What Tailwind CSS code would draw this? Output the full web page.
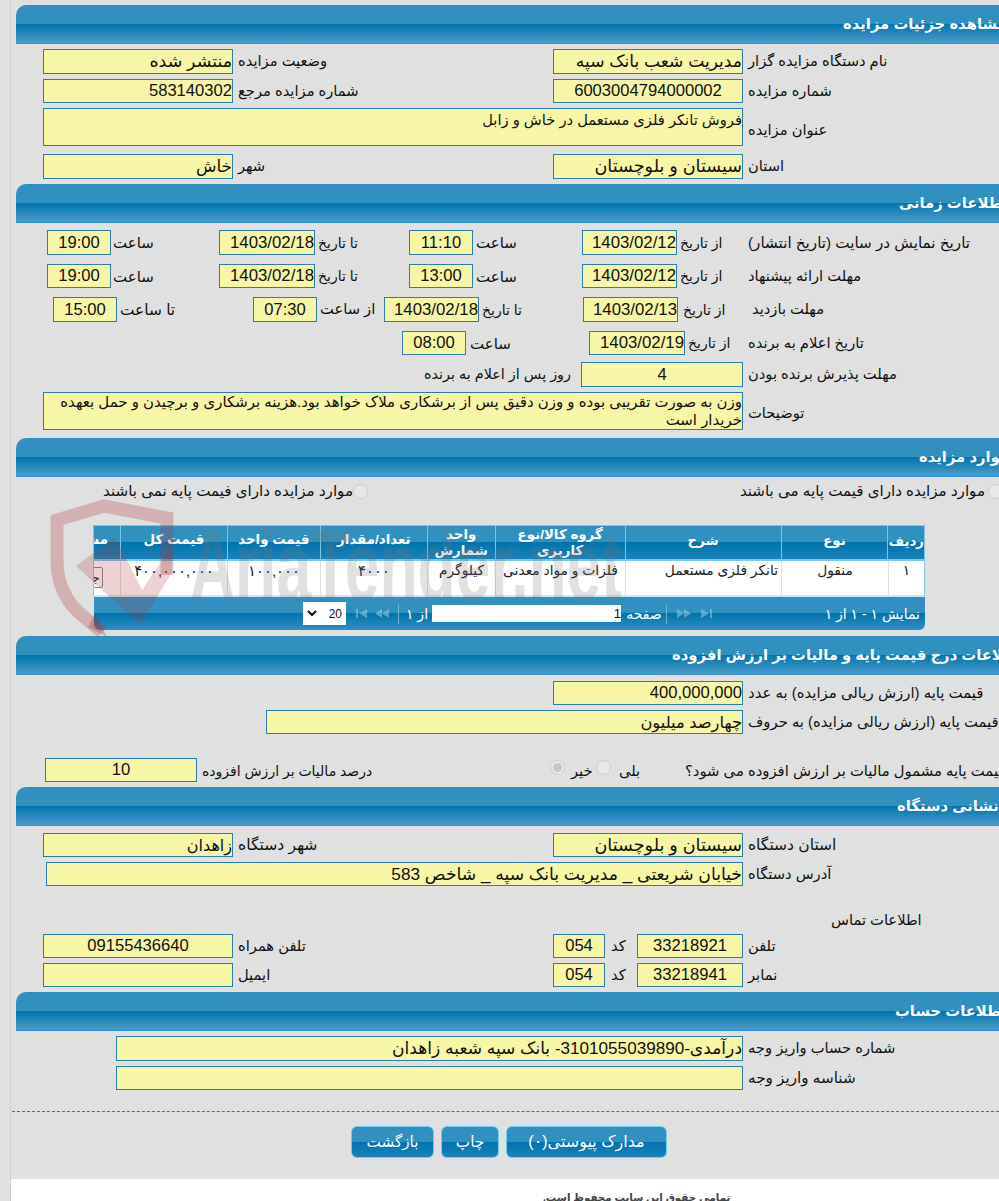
<!DOCTYPE html>
<html lang="fa">
<head>
    <meta charset="UTF-8">
    <title>مشاهده جزئیات مزایده</title>
    <script src="https://cdn.jsdelivr.net/npm/@tailwindcss/browser@4"></script>
</head>
<body class="bg-[#e0e0e0]">
<div class="relative w-[999px] h-[1201px] overflow-hidden pt-[5px] text-[14.7px] leading-none text-[#111] font-['Liberation_Sans','DejaVu_Sans',sans-serif]">
    <div class="absolute left-[10px] top-0 bottom-0 w-px bg-[#cfcfcf]"></div>

    <!-- جزئیات -->
    <div class="ml-[16px] h-[39px] flex items-center rounded-tl-[10px] border-b border-[#2b93da] bg-[linear-gradient(#3090c0_0%,#3090c0_50%,#0273ae_50%,#4a9cc8_100%)] text-white font-bold text-[14.8px]">
        <span dir="rtl" class="ml-[827px] shrink-0 whitespace-nowrap">مشاهده جزئیات مزایده</span>
    </div>
    <div class="mt-[5px] pl-[43px] h-[25px] flex items-center">
        <div dir="rtl" class="w-[190px] h-full flex items-center pt-[1px] border border-[#2a7fb0] bg-[#f7f5a6] text-[17.4px]">منتشر شده</div>
        <span dir="rtl" class="w-[320px] pl-[5px] text-left">وضعیت مزایده</span>
        <div dir="rtl" class="w-[190px] h-full flex items-center pt-[1px] border border-[#2a7fb0] bg-[#f7f5a6] text-[17.1px]">مدیریت شعب بانک سپه</div>
        <span dir="rtl" class="pl-[5px] whitespace-nowrap">نام دستگاه مزایده گزار</span>
    </div>
    <div class="mt-[5px] pl-[43px] h-[24px] flex items-center">
        <div dir="rtl" class="w-[190px] h-full flex items-center pt-[1px] border border-[#2a7fb0] bg-[#f7f5a6] text-[16.6px]">583140302</div>
        <span dir="rtl" class="w-[320px] pl-[5px] text-left">شماره مزایده مرجع</span>
        <div class="w-[190px] h-full flex items-center justify-center pt-[1px] border border-[#2a7fb0] bg-[#f7f5a6] text-[16.6px]">6003004794000002</div>
        <span dir="rtl" class="pl-[5px] whitespace-nowrap">شماره مزایده</span>
    </div>
    <div class="mt-[5px] pl-[43px] h-[38px] flex items-center">
        <div dir="rtl" class="w-[700px] h-full border border-[#2a7fb0] bg-[#f7f5a6] pt-[3px] leading-[17px]">فروش تانکر فلزی مستعمل در خاش و زابل</div>
        <span dir="rtl" class="pl-[5px] pt-[6px] whitespace-nowrap">عنوان مزایده</span>
    </div>
    <div class="mt-[8px] pl-[43px] h-[25px] flex items-center">
        <div dir="rtl" class="w-[190px] h-full flex items-center pt-[1px] border border-[#2a7fb0] bg-[#f7f5a6] text-[16.8px]">خاش</div>
        <span dir="rtl" class="w-[320px] pl-[5px] text-left">شهر</span>
        <div dir="rtl" class="w-[190px] h-full flex items-center pt-[1px] border border-[#2a7fb0] bg-[#f7f5a6] text-[17.6px]">سیستان و بلوچستان</div>
        <span dir="rtl" class="pl-[5px] whitespace-nowrap">استان</span>
    </div>

    <!-- زمانی -->
    <div class="mt-[5px] ml-[16px] h-[39px] flex items-center rounded-tl-[10px] border-b border-[#2b93da] bg-[linear-gradient(#3090c0_0%,#3090c0_50%,#0273ae_50%,#4a9cc8_100%)] text-white font-bold text-[14.8px]">
        <span dir="rtl" class="ml-[883px] shrink-0 whitespace-nowrap">اطلاعات زمانی</span>
    </div>
    <div class="mt-[7px] pl-[47px] h-[25px] flex items-center">
        <div class="w-[64px] h-full flex items-center justify-center pt-[1px] border border-[#2a7fb0] bg-[#f7f5a6] text-[16.6px]">19:00</div>
        <span dir="rtl" class="w-[108px] pl-[2px] text-left text-[15px]">ساعت</span>
        <div class="w-[96px] h-full flex items-center justify-end pt-[1px] border border-[#2a7fb0] bg-[#f7f5a6] text-[16.8px]">1403/02/18</div>
        <span dir="rtl" class="w-[94px] pl-[3px] text-left text-[14px]">تا تاریخ</span>
        <div class="w-[64px] h-full flex items-center justify-center pt-[1px] border border-[#2a7fb0] bg-[#f7f5a6] text-[16.6px]">11:10</div>
        <span dir="rtl" class="w-[109px] pl-[3px] text-left text-[15px]">ساعت</span>
        <div class="w-[95px] h-full flex items-center justify-end pt-[1px] border border-[#2a7fb0] bg-[#f7f5a6] text-[16.8px]">1403/02/12</div>
        <span dir="rtl" class="w-[71px] pl-[3px] text-left text-[14px]">از تاریخ</span>
        <span dir="rtl" class="whitespace-nowrap text-[15.2px]">تاریخ نمایش در سایت (تاریخ انتشار)</span>
    </div>
    <div class="mt-[9px] pl-[47px] h-[24px] flex items-center">
        <div class="w-[64px] h-full flex items-center justify-center pt-[1px] border border-[#2a7fb0] bg-[#f7f5a6] text-[16.6px]">19:00</div>
        <span dir="rtl" class="w-[108px] pl-[2px] text-left text-[15px]">ساعت</span>
        <div class="w-[96px] h-full flex items-center justify-end pt-[1px] border border-[#2a7fb0] bg-[#f7f5a6] text-[16.8px]">1403/02/18</div>
        <span dir="rtl" class="w-[94px] pl-[3px] text-left text-[14px]">تا تاریخ</span>
        <div class="w-[64px] h-full flex items-center justify-center pt-[1px] border border-[#2a7fb0] bg-[#f7f5a6] text-[16.6px]">13:00</div>
        <span dir="rtl" class="w-[109px] pl-[3px] text-left text-[15px]">ساعت</span>
        <div class="w-[95px] h-full flex items-center justify-end pt-[1px] border border-[#2a7fb0] bg-[#f7f5a6] text-[16.8px]">1403/02/12</div>
        <span dir="rtl" class="w-[71px] pl-[3px] text-left text-[14px]">از تاریخ</span>
        <span dir="rtl" class="whitespace-nowrap">مهلت ارائه پیشنهاد</span>
    </div>
    <div class="mt-[9px] pl-[53px] h-[25px] flex items-center">
        <div class="w-[64px] h-full flex items-center justify-center pt-[1px] border border-[#2a7fb0] bg-[#f7f5a6] text-[16.6px]">15:00</div>
        <span dir="rtl" class="w-[136px] pl-[3px] text-left text-[15.4px]">تا ساعت</span>
        <div class="w-[64px] h-full flex items-center justify-center pt-[1px] border border-[#2a7fb0] bg-[#f7f5a6] text-[16.6px]">07:30</div>
        <span dir="rtl" class="w-[67px] pl-[3px] text-left">از ساعت</span>
        <div class="w-[95px] h-full flex items-center justify-end pt-[1px] border border-[#2a7fb0] bg-[#f7f5a6] text-[16.8px]">1403/02/18</div>
        <span dir="rtl" class="w-[104px] pl-[3px] text-left text-[14px]">تا تاریخ</span>
        <div class="w-[95px] h-full flex items-center justify-end pt-[1px] border border-[#2a7fb0] bg-[#f7f5a6] text-[16.8px]">1403/02/13</div>
        <span dir="rtl" class="w-[70px] pl-[5px] text-left text-[14px]">از تاریخ</span>
        <span dir="rtl" class="pl-[4px] whitespace-nowrap">مهلت بازدید</span>
    </div>
    <div class="mt-[9px] pl-[402px] h-[24px] flex items-center">
        <div class="w-[64px] h-full flex items-center justify-center pt-[1px] border border-[#2a7fb0] bg-[#f7f5a6] text-[16.6px]">08:00</div>
        <span dir="rtl" class="w-[123px] pl-[4px] text-left text-[15px]">ساعت</span>
        <div class="w-[96px] h-full flex items-center justify-end pt-[1px] border border-[#2a7fb0] bg-[#f7f5a6] text-[16.8px]">1403/02/19</div>
        <span dir="rtl" class="w-[63px] pl-[3px] text-left text-[14px]">از تاریخ</span>
        <span dir="rtl" class="whitespace-nowrap">تاریخ اعلام به برنده</span>
    </div>
    <div class="mt-[7px] h-[25px] flex items-center">
        <span dir="rtl" class="w-[581px] pr-[10px] text-right text-[14.4px]">روز پس از اعلام به برنده</span>
        <div class="w-[162px] h-full flex items-center justify-center pt-[1px] border border-[#2a7fb0] bg-[#f7f5a6] text-[16.6px]">4</div>
        <span dir="rtl" class="pl-[5px] whitespace-nowrap">مهلت پذیرش برنده بودن</span>
    </div>
    <div class="mt-[5px] pl-[43px] h-[38px] flex items-center">
        <div dir="rtl" class="w-[700px] h-full border border-[#2a7fb0] bg-[#f7f5a6] leading-[18px] text-[14.95px]">وزن به صورت تقریبی بوده و وزن دقیق پس از برشکاری ملاک خواهد بود.هزینه برشکاری و برچیدن و حمل بعهده خریدار است</div>
        <span dir="rtl" class="pl-[5px] pt-[4px] whitespace-nowrap">توضیحات</span>
    </div>

    <!-- موارد -->
    <div class="mt-[8px] ml-[16px] h-[39px] flex items-center rounded-tl-[10px] border-b border-[#2b93da] bg-[linear-gradient(#3090c0_0%,#3090c0_50%,#0273ae_50%,#4a9cc8_100%)] text-white font-bold text-[14.8px]">
        <span dir="rtl" class="ml-[903px] shrink-0 whitespace-nowrap">موارد مزایده</span>
    </div>
    <div class="mt-[6px] pl-[102px] h-[16px] flex items-center text-[15.1px]">
        <span dir="rtl" class="w-[251px] shrink-0 text-right whitespace-nowrap">موارد مزایده دارای فیمت پایه نمی باشند</span>
        <span class="w-[15px] h-[15px] shrink-0 rounded-full border border-[#ccc] bg-[#e8e8e8]"></span>
        <span dir="rtl" class="w-[617px] shrink-0 text-right whitespace-nowrap">موارد مزایده دارای قیمت پایه می باشند</span>
        <span class="ml-[3px] w-[15px] h-[15px] shrink-0 rounded-full border border-[#ccc] bg-[#e8e8e8]"></span>
    </div>

    <!-- جدول -->
    <div class="mt-[26px] ml-[93px] w-[832px] h-[106px]">
        <div dir="ltr" class="h-[36px] flex border border-[#7cc6e8] border-b-2 bg-[linear-gradient(#3090c0_0%,#3090c0_50%,#0273ae_50%,#1a82b8_100%)] text-white font-bold text-[13.4px] leading-[16px]">
            <div dir="rtl" class="w-[27px] flex items-center overflow-hidden border-r border-[#7cc6e8] pr-[12px] pb-[5px] whitespace-nowrap">مشاهده</div>
            <div dir="rtl" class="w-[107px] flex items-center justify-center pb-[5px] border-r border-[#7cc6e8]">قیمت کل</div>
            <div dir="rtl" class="w-[93px] flex items-center justify-center pb-[5px] border-r border-[#7cc6e8]">قیمت واحد</div>
            <div dir="rtl" class="w-[107px] flex items-center justify-center pb-[5px] border-r border-[#7cc6e8]">تعداد/مقدار</div>
            <div dir="rtl" class="w-[68px] flex items-center justify-center text-center border-r border-[#7cc6e8]">واحد شمارش</div>
            <div dir="rtl" class="w-[130px] flex items-center justify-center text-center border-r border-[#7cc6e8]">گروه کالا/نوع کاربری</div>
            <div dir="rtl" class="w-[156px] flex items-center justify-center pb-[3px] border-r border-[#7cc6e8]">شرح</div>
            <div dir="rtl" class="w-[107px] flex items-center justify-center pb-[3px] border-r border-[#7cc6e8]">نوع</div>
            <div dir="rtl" class="flex-1 flex items-center justify-center pb-[1px]">ردیف</div>
        </div>
        <div class="h-[36px] flex bg-white border-x border-b-2 border-x-[#8cc4e0] border-b-[#cfe6f2] text-[13.8px] text-[#222]">
            <div dir="rtl" class="w-[27px] overflow-hidden border-r border-[#ddd] pt-[6px] pr-[17px]"><span class="block w-[40px] h-[21px] pr-[2px] pt-[3px] border border-[#888] rounded-[2px] whitespace-nowrap">جزئیات</span></div>
            <div dir="rtl" class="w-[107px] pt-[3px] text-center text-[14.8px] border-r border-[#ddd]">۴۰۰,۰۰۰,۰۰۰</div>
            <div dir="rtl" class="w-[93px] pt-[3px] text-center text-[14.8px] border-r border-[#ddd]">۱۰۰,۰۰۰</div>
            <div dir="rtl" class="w-[107px] pt-[3px] text-center text-[14.8px] border-r border-[#ddd]">۴۰۰۰</div>
            <div dir="rtl" class="w-[68px] pt-[3px] text-center border-r border-[#ddd]">کیلوگرم</div>
            <div dir="rtl" class="w-[130px] pt-[3px] text-center border-r border-[#ddd]">فلزات و مواد معدنی</div>
            <div dir="rtl" class="w-[156px] pt-[3px] pr-[3px] border-r border-[#ddd]">تانکر فلزی مستعمل</div>
            <div dir="rtl" class="w-[107px] pt-[3px] text-center border-r border-[#ddd]">منقول</div>
            <div dir="rtl" class="flex-1 pt-[3px] text-center">۱</div>
        </div>
        <div class="ml-[1px] h-[33px] flex items-center rounded-b-[6px] bg-[linear-gradient(#3090c0_0%,#3090c0_50%,#0273ae_50%,#2f8fc0_100%)] text-white text-[14px]">
            <div class="ml-[209px] w-[43px] h-[23px] flex items-center justify-between px-[4px] bg-white text-[#111] text-[12px]">
                <svg class="w-[10px] h-[7px]" viewBox="0 0 10 7" fill="none" stroke="#111" stroke-width="2"><path d="M1 1l4 4 4-4"/></svg>
                <span>20</span>
            </div>
            <svg class="ml-[9px] w-[13px] h-[9px] opacity-40" viewBox="0 0 13 9" fill="#cfe6f2"><path d="M1 0h2v9H1zM12 0v9L4 4.500z"/></svg>
            <svg class="ml-[7px] w-[15px] h-[9px] opacity-40" viewBox="0 0 15 9" fill="#cfe6f2"><path d="M7 0v9L0 4.500zM14 0v9L7 4.500z"/></svg>
            <span class="ml-[8px] w-px h-[20px] bg-[#6db2d6]"></span>
            <span dir="rtl" class="ml-[6px] w-[24px] text-center">از ۱</span>
            <div class="ml-[3px] w-[189px] h-[17px] flex items-center justify-end bg-white text-[#111] text-[13px]">1</div>
            <span dir="rtl" class="ml-[5px] w-[36px] text-center">صفحه</span>
            <span class="ml-[4px] w-px h-[20px] bg-[#6db2d6]"></span>
            <svg class="ml-[9px] w-[15px] h-[9px] opacity-40" viewBox="0 0 15 9" fill="#cfe6f2"><path d="M1 0v9l7-4.500zM8 0v9l7-4.500z"/></svg>
            <svg class="ml-[9px] w-[13px] h-[9px] opacity-40" viewBox="0 0 13 9" fill="#cfe6f2"><path d="M1 0v9l8-4.500zM10 0h2v9h-2z"/></svg>
            <span dir="rtl" class="ml-[auto] mr-[5px] whitespace-nowrap">نمایش ۱ - ۱ از ۱</span>
        </div>
    </div>

    <!-- قیمت پایه -->
    <div class="mt-[5px] ml-[16px] h-[39px] flex items-center rounded-tl-[10px] border-b border-[#2b93da] bg-[linear-gradient(#3090c0_0%,#3090c0_50%,#0273ae_50%,#4a9cc8_100%)] text-white font-bold text-[14.8px]">
        <span dir="rtl" class="ml-[656px] shrink-0 whitespace-nowrap">اطلاعات درج قیمت پایه و مالیات بر ارزش افزوده</span>
    </div>
    <div class="mt-[6px] pl-[553px] h-[24px] flex items-center">
        <div class="w-[190px] h-full flex items-center justify-end pt-[1px] border border-[#2a7fb0] bg-[#f7f5a6] text-[16.6px]">400,000,000</div>
        <span dir="rtl" class="pl-[5px] whitespace-nowrap text-[14.9px]">قیمت پایه (ارزش ریالی مزایده) به عدد</span>
    </div>
    <div class="mt-[5px] pl-[266px] h-[24px] flex items-center">
        <div dir="rtl" class="w-[477px] h-full flex items-center pt-[1px] border border-[#2a7fb0] bg-[#f7f5a6] text-[16.3px]">چهارصد میلیون</div>
        <span dir="rtl" class="pl-[5px] whitespace-nowrap text-[14.8px]">قیمت پایه (ارزش ریالی مزایده) به حروف</span>
    </div>
    <div class="mt-[24px] pl-[45px] h-[24px] flex items-center">
        <div class="w-[152px] shrink-0 h-full flex items-center justify-center pt-[1px] border border-[#2a7fb0] bg-[#f7f5a6] text-[16.6px]">10</div>
        <span dir="rtl" class="w-[353px] shrink-0 pl-[5px] pt-[2px] text-left text-[14px]">درصد مالیات بر ارزش افزوده</span>
        <span class="w-[15px] h-[15px] shrink-0 mb-[6px] flex items-center justify-center rounded-full border border-[#ccc] bg-[#e8e8e8]"><span class="w-[9px] h-[9px] rounded-full bg-[#c8c8c8]"></span></span>
        <span dir="rtl" class="w-[31px] shrink-0 pl-[6px] pt-[2px] text-left">خیر</span>
        <span class="w-[15px] h-[15px] shrink-0 mb-[6px] rounded-full border border-[#ccc] bg-[#e8e8e8]"></span>
        <span dir="rtl" class="w-[74px] shrink-0 pl-[8px] pt-[2px] text-left">بلی</span>
        <span dir="rtl" class="shrink-0 pt-[2px] whitespace-nowrap text-[14.8px]">قیمت پایه مشمول مالیات بر ارزش افزوده می شود؟</span>
    </div>

    <!-- نشانی -->
    <div class="mt-[5px] ml-[16px] h-[39px] flex items-center rounded-tl-[10px] border-b border-[#2b93da] bg-[linear-gradient(#3090c0_0%,#3090c0_50%,#0273ae_50%,#4a9cc8_100%)] text-white font-bold text-[14.8px]">
        <span dir="rtl" class="ml-[881px] shrink-0 whitespace-nowrap">نشانی دستگاه</span>
    </div>
    <div class="mt-[7px] pl-[43px] h-[24px] flex items-center">
        <div dir="rtl" class="w-[190px] h-full flex items-center pt-[1px] border border-[#2a7fb0] bg-[#f7f5a6] text-[16px]">زاهدان</div>
        <span dir="rtl" class="w-[320px] pl-[5px] text-left text-[15.6px]">شهر دستگاه</span>
        <div dir="rtl" class="w-[190px] h-full flex items-center pt-[1px] border border-[#2a7fb0] bg-[#f7f5a6] text-[17.6px]">سیستان و بلوچستان</div>
        <span dir="rtl" class="pl-[5px] whitespace-nowrap text-[15.5px]">استان دستگاه</span>
    </div>
    <div class="mt-[5px] pl-[46px] h-[24px] flex items-center">
        <div dir="rtl" class="w-[697px] h-full flex items-center pt-[1px] border border-[#2a7fb0] bg-[#f7f5a6] text-[17.2px]">خیابان شریعتی _ مدیریت بانک سپه _ شاخص 583</div>
        <span dir="rtl" class="pl-[5px] whitespace-nowrap">آدرس دستگاه</span>
    </div>
    <div class="mt-[24px] pl-[831px] h-[20px] flex items-center">
        <span dir="rtl" class="whitespace-nowrap">اطلاعات تماس</span>
    </div>
    <div class="mt-[4px] pl-[43px] h-[24px] flex items-center">
        <div class="w-[190px] h-full flex items-center justify-center pt-[1px] border border-[#2a7fb0] bg-[#f7f5a6] text-[16.6px]">09155436640</div>
        <span dir="rtl" class="w-[320px] pl-[5px] text-left">تلفن همراه</span>
        <div class="w-[52px] h-full flex items-center justify-center pt-[1px] border border-[#2a7fb0] bg-[#f7f5a6] text-[16.6px]">054</div>
        <span dir="rtl" class="w-[32px] pl-[6px] text-left">کد</span>
        <div class="w-[106px] h-full flex items-center justify-center pt-[1px] border border-[#2a7fb0] bg-[#f7f5a6] text-[16.6px]">33218921</div>
        <span dir="rtl" class="pl-[5px] whitespace-nowrap">تلفن</span>
    </div>
    <div class="mt-[5px] pl-[43px] h-[24px] flex items-center">
        <div class="w-[190px] h-full border border-[#2a7fb0] bg-[#f7f5a6]"></div>
        <span dir="rtl" class="w-[320px] pl-[5px] text-left">ایمیل</span>
        <div class="w-[52px] h-full flex items-center justify-center pt-[1px] border border-[#2a7fb0] bg-[#f7f5a6] text-[16.6px]">054</div>
        <span dir="rtl" class="w-[32px] pl-[6px] text-left">کد</span>
        <div class="w-[106px] h-full flex items-center justify-center pt-[1px] border border-[#2a7fb0] bg-[#f7f5a6] text-[16.6px]">33218941</div>
        <span dir="rtl" class="pl-[5px] whitespace-nowrap">نمابر</span>
    </div>

    <!-- حساب -->
    <div class="mt-[5px] ml-[16px] h-[39px] flex items-center rounded-tl-[10px] border-b border-[#2b93da] bg-[linear-gradient(#3090c0_0%,#3090c0_50%,#0273ae_50%,#4a9cc8_100%)] text-white font-bold text-[14.8px]">
        <span dir="rtl" class="ml-[879px] shrink-0 whitespace-nowrap">اطلاعات حساب</span>
    </div>
    <div class="mt-[5px] pl-[116px] h-[25px] flex items-center">
        <div dir="rtl" class="w-[627px] h-full flex items-center pt-[1px] border border-[#2a7fb0] bg-[#f7f5a6] text-[17.1px]">درآمدی-3101055039890- بانک سپه شعبه زاهدان</div>
        <span dir="rtl" class="pl-[5px] whitespace-nowrap">شماره حساب واریز وجه</span>
    </div>
    <div class="mt-[5px] pl-[116px] h-[24px] flex items-center">
        <div class="w-[627px] h-full border border-[#2a7fb0] bg-[#f7f5a6]"></div>
        <span dir="rtl" class="pl-[5px] whitespace-nowrap text-[15.2px]">شناسه واریز وجه</span>
    </div>

    <div class="mt-[21px] ml-[12px] border-t border-dashed border-[#2a7fa8]"></div>

    <div class="mt-[14px] h-[32px] pl-[351px] flex gap-[7px] text-white text-[15.2px]">
        <button dir="rtl" class="w-[83px] rounded-[6px] border border-[#6fcdf0] bg-[linear-gradient(#3090c0_0%,#3090c0_50%,#0273ae_50%,#1a82b8_100%)]">بازگشت</button>
        <button dir="rtl" class="w-[58px] rounded-[6px] border border-[#6fcdf0] bg-[linear-gradient(#3090c0_0%,#3090c0_50%,#0273ae_50%,#1a82b8_100%)]">چاپ</button>
        <button dir="rtl" class="w-[161px] rounded-[6px] border border-[#6fcdf0] bg-[linear-gradient(#3090c0_0%,#3090c0_50%,#0273ae_50%,#1a82b8_100%)] text-[16px]">مدارک پیوستی(۰)</button>
    </div>

    <div class="mt-[21px] ml-[11px] h-[40px] bg-white pt-[14px] pl-[532px] text-[10.3px] text-[#444] font-bold">
        <span dir="rtl" class="whitespace-nowrap">تمامی حقوق این سایت محفوظ است.</span>
    </div>

    <!-- watermark -->
    <svg class="absolute left-0 top-0 pointer-events-none" width="999" height="1201" viewBox="0 0 999 1201">
        <path d="M102 632L84 617C66 603 57 585 57 560V520L104 506L167 518V575" fill="none" stroke="#a33" stroke-opacity=".27" stroke-width="13"/>
        <path d="M76 566L115 537L142 590L172 545V572L140 625Z" fill="#a33" fill-opacity=".22"/>
        <path d="M95 613L107 637L88 627Z" fill="#a33" fill-opacity=".3"/>
        <text x="190" y="600" font-family="Liberation Sans" font-weight="700" font-size="100" textLength="432" lengthAdjust="spacingAndGlyphs" fill="#777" fill-opacity=".22">AriaTender.net</text>
    </svg>
</div>
</body>
</html>
